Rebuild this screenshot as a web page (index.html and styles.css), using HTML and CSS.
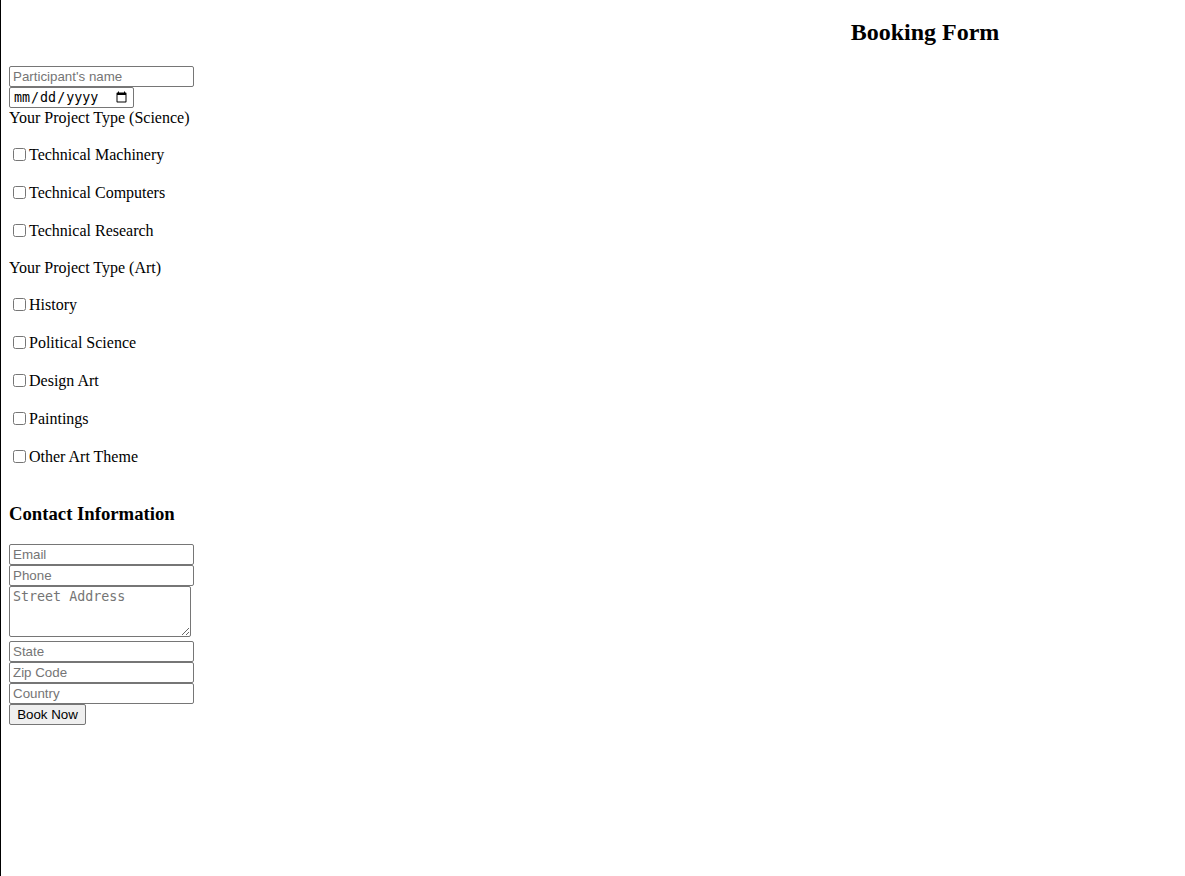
FILE: index.html
```html
<!DOCTYPE html>
<html>
<head>
<meta charset="utf-8">
<title>Booking Form</title>
<link rel="stylesheet" href="styles.css">
</head>
<body>
<h2 class="title">Booking Form</h2>
<form class="form">
  <input class="field" type="text" placeholder="Participant's name">
  <input class="date" type="date">
  <div class="group-label">Your Project Type (Science)</div>
  <p class="option"><input class="check" type="checkbox" id="c1"><label for="c1">Technical Machinery</label></p>
  <p class="option"><input class="check" type="checkbox" id="c2"><label for="c2">Technical Computers</label></p>
  <p class="option"><input class="check" type="checkbox" id="c3"><label for="c3">Technical Research</label></p>
  <div class="group-label">Your Project Type (Art)</div>
  <p class="option"><input class="check" type="checkbox" id="a1"><label for="a1">History</label></p>
  <p class="option"><input class="check" type="checkbox" id="a2"><label for="a2">Political Science</label></p>
  <p class="option"><input class="check" type="checkbox" id="a3"><label for="a3">Design Art</label></p>
  <p class="option"><input class="check" type="checkbox" id="a4"><label for="a4">Paintings</label></p>
  <p class="option last"><input class="check" type="checkbox" id="a5"><label for="a5">Other Art Theme</label></p>
  <div class="contact">
    <h3 class="subtitle">Contact Information</h3>
    <input class="field" type="email" placeholder="Email">
    <input class="field" type="tel" placeholder="Phone">
    <textarea class="address" rows="3" placeholder="Street Address"></textarea>
    <input class="field" type="text" placeholder="State">
    <input class="field" type="text" placeholder="Zip Code">
    <input class="field" type="text" placeholder="Country">
    <button class="submit" type="button">Book Now</button>
  </div>
</form>
</body>
</html>
```
FILE: styles.css
```css
html {
  border-left: 1px solid #000;
  min-height: 100%;
  box-sizing: border-box;
}
body {
  margin: 8px;
  font-family: "Liberation Serif", "Times New Roman", serif;
  font-size: 16px;
  color: #000;
}
.title {
  font-size: 24px;
  font-weight: bold;
  margin: 11px 0 20px;
  text-align: center;
  padding-left: 664px;
}
.form {
  margin: 0;
}
.field {
  display: block;
  box-sizing: border-box;
  width: 185px;
  height: 21px;
  margin: 0;
  padding: 1px 3px;
  border: 1px solid #767676;
  border-radius: 2px;
  font-family: "Liberation Sans", Arial, sans-serif;
  font-size: 13.33px;
}
.date {
  display: block;
  box-sizing: border-box;
  width: 125px;
  height: 21px;
  margin: 0;
  padding: 1px 3px;
  border: 1px solid #767676;
  border-radius: 2px;
  font-family: "DejaVu Sans Mono", monospace;
  font-size: 13.33px;
}
.group-label {
  line-height: 20px;
}
.option {
  margin: 16px 0;
  line-height: 22px;
}
.check {
  margin: 3px 3px 3px 4px;
  vertical-align: -1px;
}
.contact {
  display: flow-root;
}
.subtitle {
  font-size: 18.72px;
  margin: 18.72px 0 19.72px;
}
.address {
  display: block;
  box-sizing: border-box;
  width: 182px;
  height: 51px;
  margin: 0 0 4px;
  padding: 2px 3px;
  border: 1px solid #767676;
  border-radius: 2px;
  font-family: "DejaVu Sans Mono", monospace;
  font-size: 13.33px;
}
.submit {
  display: block;
  box-sizing: border-box;
  width: 77px;
  height: 21px;
  margin: 0;
  padding: 1px 6px;
  font-family: "Liberation Sans", Arial, sans-serif;
  font-size: 13.33px;
  background: #efefef;
  border: 1px solid #767676;
  border-radius: 2px;
  color: #000;
}
```
